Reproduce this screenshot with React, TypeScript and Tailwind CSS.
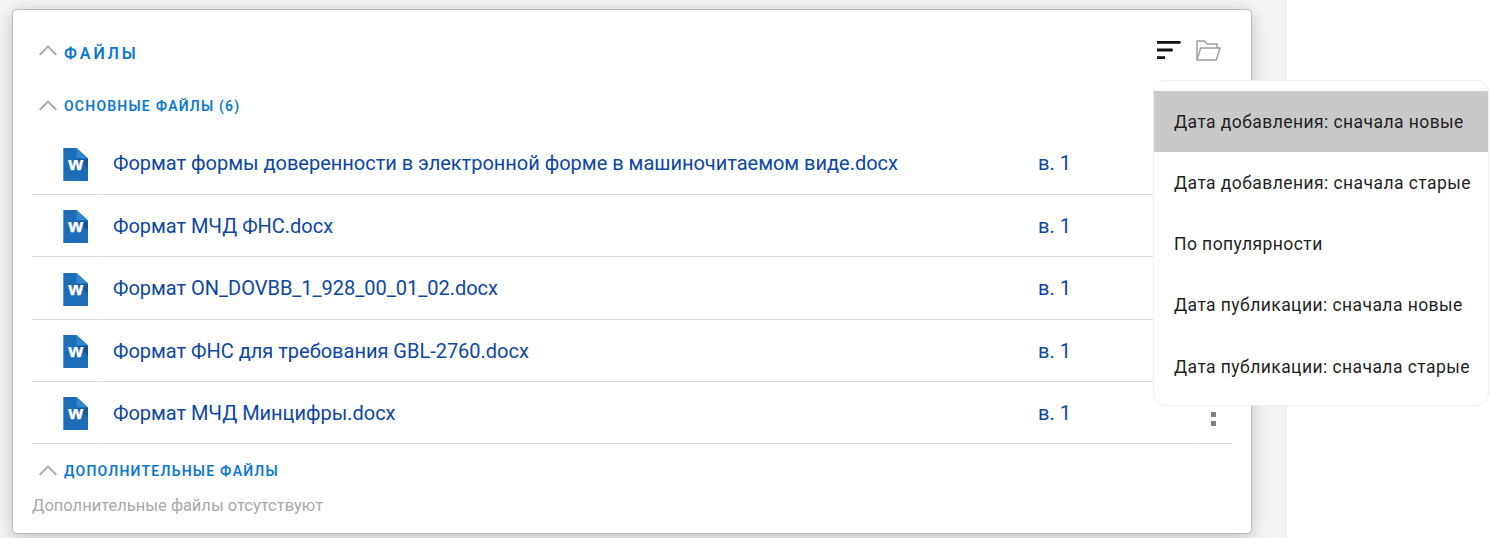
import React from "react";

const files = [
  { name: "Формат формы доверенности в электронной форме в машиночитаемом виде.docx", layout: "h-[62px]", text: "pb-[2px]" },
  { name: "Формат МЧД ФНС.docx", layout: "h-[62px]", text: "" },
  { name: "Формат ON_DOVBB_1_928_00_01_02.docx", layout: "h-[63px]", text: "" },
  { name: "Формат ФНС для требования GBL-2760.docx", layout: "h-[62px]", text: "" },
  { name: "Формат МЧД Минцифры.docx", layout: "h-[62px]", text: "" },
];

const options = [
  "Дата добавления: сначала новые",
  "Дата добавления: сначала старые",
  "По популярности",
  "Дата публикации: сначала новые",
  "Дата публикации: сначала старые",
];

function Chevron() {
  return (
    <svg width="18" height="11" viewBox="0 0 18 11" fill="none" stroke="#a6a6a6" strokeWidth="1.9" className="shrink-0">
      <path d="M0.7 9.8 9 1.5l8.3 8.3" />
    </svg>
  );
}

function WordIcon() {
  return (
    <svg width="25" height="33" viewBox="0 0 25 33" className="relative top-px shrink-0">
      <path d="M0.3 0h13.2L25 10.5V33H0.3z" fill="#1d6cb7" />
      <path d="M13.5 10.5 25 20.5v-10z" fill="#17559a" />
      <path d="M13.5 0 25 10.5H13.5z" fill="#2f86cc" />
      <text x="12.7" y="22.4" textAnchor="middle" fill="#fff" stroke="#fff" strokeWidth="0.25" fontSize="18" fontWeight="700" fontFamily="Open Sans, sans-serif">
        w
      </text>
    </svg>
  );
}

function SortIcon() {
  return (
    <svg width="24" height="20" viewBox="0 0 24 20" fill="#111">
      <path d="M0 1h23.5v2.8H0zM0 8.6h15.7v2.8H0zM0 16.2h8v2.8H0z" />
    </svg>
  );
}

function FolderIcon() {
  return (
    <svg width="25" height="21" viewBox="0 0 25 21" fill="none" stroke="#a0a0a0" strokeWidth="1.5">
      <path d="M1 20V1h7.5l2.7 3H21v4" />
      <path d="M1 20 4.7 8H24l-3.7 12z" />
    </svg>
  );
}

export default function App() {
  return (
    <div className="relative h-[538px] w-[1491px] overflow-hidden bg-white font-[Roboto,sans-serif]">
      <div className="h-full w-[1287px] overflow-hidden border-r-2 border-[#f0f0f0] bg-[#f4f4f4] pt-[9px] pl-3">
        <section className="flex h-[525px] w-[1240px] flex-col rounded-[5px] border border-[#bdbdbd] bg-white pr-[19px] pl-[19px] shadow-[0_3px_16px_rgba(0,0,0,0.22)]">
          <header className="flex h-[68px] items-start justify-between pl-[7px]">
            <div className="flex items-start pt-[35px]">
              <Chevron />
              <h1 className="-mt-[3px] ml-[7px] text-base leading-[24px] font-semibold tracking-[2.9px] text-[#0b78d0]">ФАЙЛЫ</h1>
            </div>
            <div className="flex items-start gap-[15px] pt-[30px] pr-[11px]">
              <SortIcon />
              <FolderIcon />
            </div>
          </header>
          <div className="flex h-[55px] items-start pt-[22px] pl-[7px]">
            <Chevron />
            <h2 className="-mt-1 ml-[7px] text-sm leading-[20px] font-semibold tracking-[1.22px] text-[#0b78d0]">ОСНОВНЫЕ ФАЙЛЫ (6)</h2>
          </div>
          <ul>
            {files.map((file) => (
              <li key={file.name} className={`flex gap-px text-[20px] text-[#0d47a1] ${file.layout}`}>
                <div className="flex w-[69px] items-center border-b border-[#dadada] pl-[31px]">
                  <WordIcon />
                </div>
                <div className={`flex w-[1092px] items-center border-b border-[#dadada] pl-[11px] ${file.text}`}>
                  <span className="w-[925px] tracking-[-0.015px]">{file.name}</span>
                  <span>в. 1</span>
                </div>
                <div className="flex w-[37px] flex-col gap-1 border-b border-[#dadada] pt-[30px] pl-4">
                  <i className="size-[5px] bg-[#808080]" />
                  <i className="size-[5px] bg-[#808080]" />
                </div>
              </li>
            ))}
          </ul>
          <div className="flex h-[50px] items-start pt-[21px] pl-[7px]">
            <Chevron />
            <h2 className="-mt-1 ml-[7px] text-sm leading-[20px] font-semibold tracking-[1.25px] text-[#0b78d0]">ДОПОЛНИТЕЛЬНЫЕ ФАЙЛЫ</h2>
          </div>
          <p className="text-[16.5px] leading-[24px] text-[#a8a8a8]">Дополнительные файлы отсутствуют</p>
        </section>
      </div>
      <ul className="absolute top-[80px] left-[1153px] h-[326px] w-[336px] rounded-xl border border-[#f0f0f0] bg-white pt-[10px] text-[17.5px] tracking-[0.43px] text-[#1f1f1f]">
        {options.map((option, index) => (
          <li
            key={option}
            className={`flex h-[61.3px] items-center pl-5 whitespace-nowrap ${index === 0 ? "bg-[#c9c9c9]" : ""}`}
          >
            {option}
          </li>
        ))}
      </ul>
    </div>
  );
}
